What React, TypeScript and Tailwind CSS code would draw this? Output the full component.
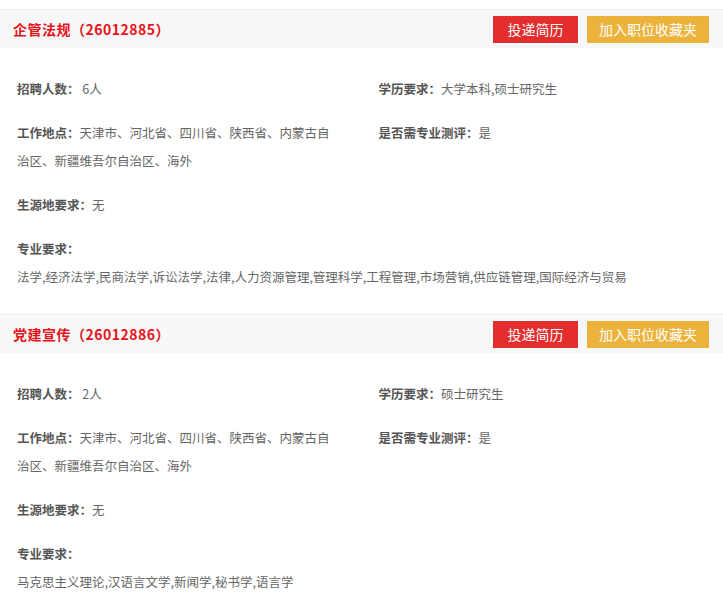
import React from 'react';

type Job = {
  title: string;
  code: string;
  count: string;
  edu: string;
  place: string;
  test: string;
  origin: string;
  majors: string;
};

const jobs: Job[] = [
  {
    title: '企管法规',
    code: '26012885',
    count: '6人',
    edu: '大学本科,硕士研究生',
    place: '天津市、河北省、四川省、陕西省、内蒙古自治区、新疆维吾尔自治区、海外',
    test: '是',
    origin: '无',
    majors: '法学,经济法学,民商法学,诉讼法学,法律,人力资源管理,管理科学,工程管理,市场营销,供应链管理,国际经济与贸易',
  },
  {
    title: '党建宣传',
    code: '26012886',
    count: '2人',
    edu: '硕士研究生',
    place: '天津市、河北省、四川省、陕西省、内蒙古自治区、新疆维吾尔自治区、海外',
    test: '是',
    origin: '无',
    majors: '马克思主义理论,汉语言文学,新闻学,秘书学,语言学',
  },
];

function Label({ children }: { children: React.ReactNode }) {
  return <span className="font-bold text-[#555]">{children}</span>;
}

function JobCard({ job }: { job: Job }) {
  return (
    <div className="border-t border-[#ebebeb]">
      <div className="h-[38px] bg-[#f8f8f8] flex items-center justify-between pl-[13px] pr-[14px]">
        <h2 className="text-[14px] font-bold text-[#e5141c] tracking-[0.5px]">
          {job.title}（{job.code}）
        </h2>
        <div className="flex gap-[9px]">
          <button className="w-[85px] h-[27px] bg-[#e42d2d] text-white text-[14px]">投递简历</button>
          <button className="w-[122px] h-[27px] bg-[#ebb33b] text-white text-[14px]">加入职位收藏夹</button>
        </div>
      </div>
      <div className="pt-[27px] pb-[23px] text-[12.5px] leading-[28px] text-[#666]">
        <div className="grid grid-cols-2">
          <div className="pl-[17px] pr-[20px]">
            <Label>招聘人数：</Label> {job.count}
          </div>
          <div className="pl-[17px] pr-[20px]">
            <Label>学历要求：</Label>{job.edu}
          </div>
        </div>
        <div className="grid grid-cols-2 mt-4">
          <div className="pl-[17px] pr-[26px]">
            <Label>工作地点：</Label>{job.place}
          </div>
          <div className="pl-[17px] pr-[20px]">
            <Label>是否需专业测评：</Label>{job.test}
          </div>
        </div>
        <div className="pl-[17px] mt-4">
          <Label>生源地要求：</Label>{job.origin}
        </div>
        <div className="pl-[17px] mt-4">
          <Label>专业要求：</Label>
        </div>
        <div className="pl-[17px]">{job.majors}</div>
      </div>
    </div>
  );
}

export default function App() {
  return (
    <div className="w-[723px] h-[612px] overflow-hidden bg-white pt-[9px] font-['Noto_Sans_CJK_SC',sans-serif]">
      {jobs.map(job => (
        <JobCard key={job.code} job={job} />
      ))}
    </div>
  );
}
